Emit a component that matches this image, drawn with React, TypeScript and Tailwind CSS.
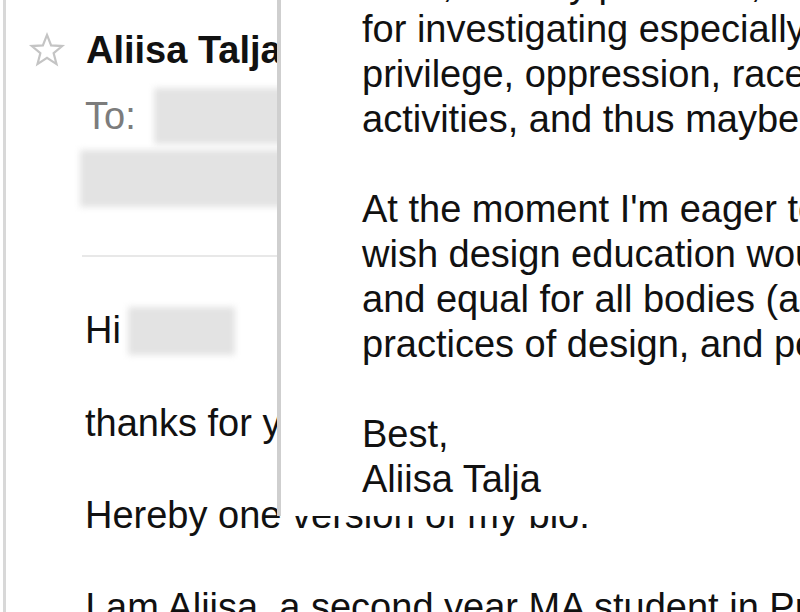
import React from "react";

const Star = () => (
  <svg width="38" height="38" viewBox="0 0 24 24" fill="none" stroke="#c4c4c4" strokeWidth="1.4" strokeLinejoin="miter">
    <path d="M12 2.5l2.6 6.6 7 .4-5.4 4.5 1.8 6.9L12 17l-6 3.9 1.8-6.9L2.4 9.5l7-.4z" />
  </svg>
);

const Blur: React.FC<{ className: string }> = ({ className }) => (
  <div className={"bg-[#e3e3e3] blur-[3px] " + className}></div>
);

const overlayLines = [
  "work, and my practices, as a tool and a space",
  "for investigating especially questions of power,",
  "privilege, oppression, race and gender in design",
  "activities, and thus maybe also to change them.",
  "",
  "At the moment I'm eager to find out how I could",
  "wish design education would become more open",
  "and equal for all bodies (and minds), and to the",
  "practices of design, and people who are doing it.",
  "",
  "Best,",
  "Aliisa Talja",
];

const App: React.FC = () => {
  return (
    <div className="relative w-[800px] h-[612px] overflow-hidden bg-white text-[38px] text-[#111111] font-['Liberation_Sans',Arial,sans-serif]">
      <div className="ml-[3px] h-full border-l-[3px] border-[#d8d8d8]">
        <div className="pt-[27px] pl-[22px] flex items-center gap-[20px] h-[73px] whitespace-nowrap">
          <Star />
          <span className="font-bold leading-[46px]">Aliisa Talja &lt;aliisa.talja@aalto.fi&gt;</span>
        </div>
        <div className="pl-[79px] whitespace-nowrap">
          <div className="mt-[15px] flex items-center h-[56px]">
            <span className="leading-[46px] text-[#7c7c7c]">To:</span>
            <Blur className="ml-[18px] h-[56px] w-[300px]" />
          </div>
          <Blur className="mt-[6px] -ml-[5px] h-[57px] w-[400px]" />
          <div className="mt-[48px] -ml-[3px] h-[2px] w-[400px] bg-[#e8e8e8]"></div>
          <div className="mt-[50px] flex items-start h-[48px]">
            <span className="leading-[46px]">Hi</span>
            <Blur className="ml-[7px] h-[48px] w-[107px]" />
          </div>
          <p className="mt-[45px] leading-[46px]">thanks for your message and interest!</p>
          <p className="mt-[46px] leading-[46px]">Hereby one version of my bio:</p>
          <p className="mt-[46px] leading-[46px]">I am Aliisa, a second year MA student in Product design</p>
        </div>
      </div>

      <div className="absolute left-[277px] top-0 w-[523px] h-[516px] overflow-hidden bg-white border-l-[4px] border-[#cfcfcf]">
        <div className="-mt-[38px] pl-[81px] leading-[45px] whitespace-nowrap">
          {overlayLines.map((line, i) => (
            <div key={i} className="h-[45px]">{line}</div>
          ))}
        </div>
      </div>
    </div>
  );
};

export default App;
